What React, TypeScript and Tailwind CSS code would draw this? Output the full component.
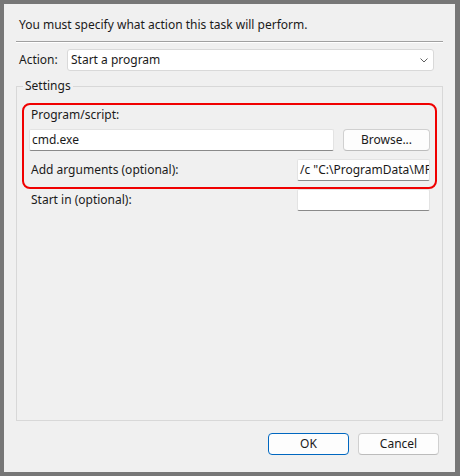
import React from 'react';

const font = "font-['Segoe_UI','Noto_Sans',sans-serif] text-[12px] text-[#1a1a1a]";

function TextBox({ value, className }: { value?: string; className: string }) {
  return (
    <div className={`h-[22px] bg-white border border-[#e3e3e3] border-b-[#8a8a8a] rounded-[2px] pl-[2px] flex items-center overflow-hidden whitespace-nowrap ${className}`}>
      {value}
    </div>
  );
}

function Button({ label, primary, w }: { label: string; primary?: boolean; w: string }) {
  return (
    <button
      className={`h-[22px] ${w} rounded-[4px] bg-[#fdfdfd] flex items-center justify-center border ${
        primary ? 'border-[#0067c0]' : 'border-[#d0d0d0] border-b-[#bcbcbc]'
      }`}
    >
      {label}
    </button>
  );
}

export default function App() {
  return (
    <div className={`w-[460px] h-[476px] bg-[#777777] pt-[4px] pl-[4px] pr-[5px] pb-[4px] ${font}`}>
      <div className="h-full bg-[#f0f0f0] flex flex-col px-[12px] pt-[13px]">
        {/* header */}
        <div className="h-[16px] leading-[16px] pl-[3px]">You must specify what action this task will perform.</div>
        <div className="mt-[8px] border-t border-t-[#a0a0a0] border-b border-b-white" />

        {/* action */}
        <div className="mt-[6px] flex items-center h-[22px]">
          <div className="w-[51px] pl-[3px]">Action:</div>
          <div className="w-[367px] h-[22px] bg-white border border-[#d9d9d9] rounded-[3px] flex items-center justify-between pl-[3px] pr-[5px]">
            <span>Start a program</span>
            <svg width="8" height="5" viewBox="0 0 8 5">
              <polyline points="0.5,0.5 4,4 7.5,0.5" fill="none" stroke="#606060" strokeWidth="1" />
            </svg>
          </div>
        </div>

        {/* settings group */}
        <div className="relative mt-[15px] h-[335px] border border-[#d8d8d8] px-[5px] pt-[16px]">
          <div className="absolute left-[6px] top-[-9px] px-[2px] bg-[#f0f0f0] leading-[16px]">Settings</div>

          <div className="border-2 border-[#f00000] rounded-[8px] px-[5px] pt-[2px] pb-[6px]">
            <div className="h-[16px] leading-[16px] pl-[2px]">Program/script:</div>
            <div className="mt-[6px] flex items-center justify-between">
              <TextBox value="cmd.exe" className="w-[305px]" />
              <Button label="Browse..." w="w-[87px]" />
            </div>
            <div className="mt-[8px] flex items-center justify-between h-[22px]">
              <div className="pl-[2px]">Add arguments (optional):</div>
              <TextBox value={'/c "C:\\ProgramData\\MP'} className="w-[133px]" />
            </div>
          </div>

          <div className="flex items-center justify-between h-[22px] px-[7px]">
            <div className="pl-[2px]">Start in (optional):</div>
            <TextBox className="w-[133px]" />
          </div>
        </div>

        {/* buttons */}
        <div className="mt-[12px] flex justify-end gap-[9px] pr-[4px]">
          <Button label="OK" primary w="w-[81px]" />
          <Button label="Cancel" w="w-[81px]" />
        </div>
      </div>
    </div>
  );
}
